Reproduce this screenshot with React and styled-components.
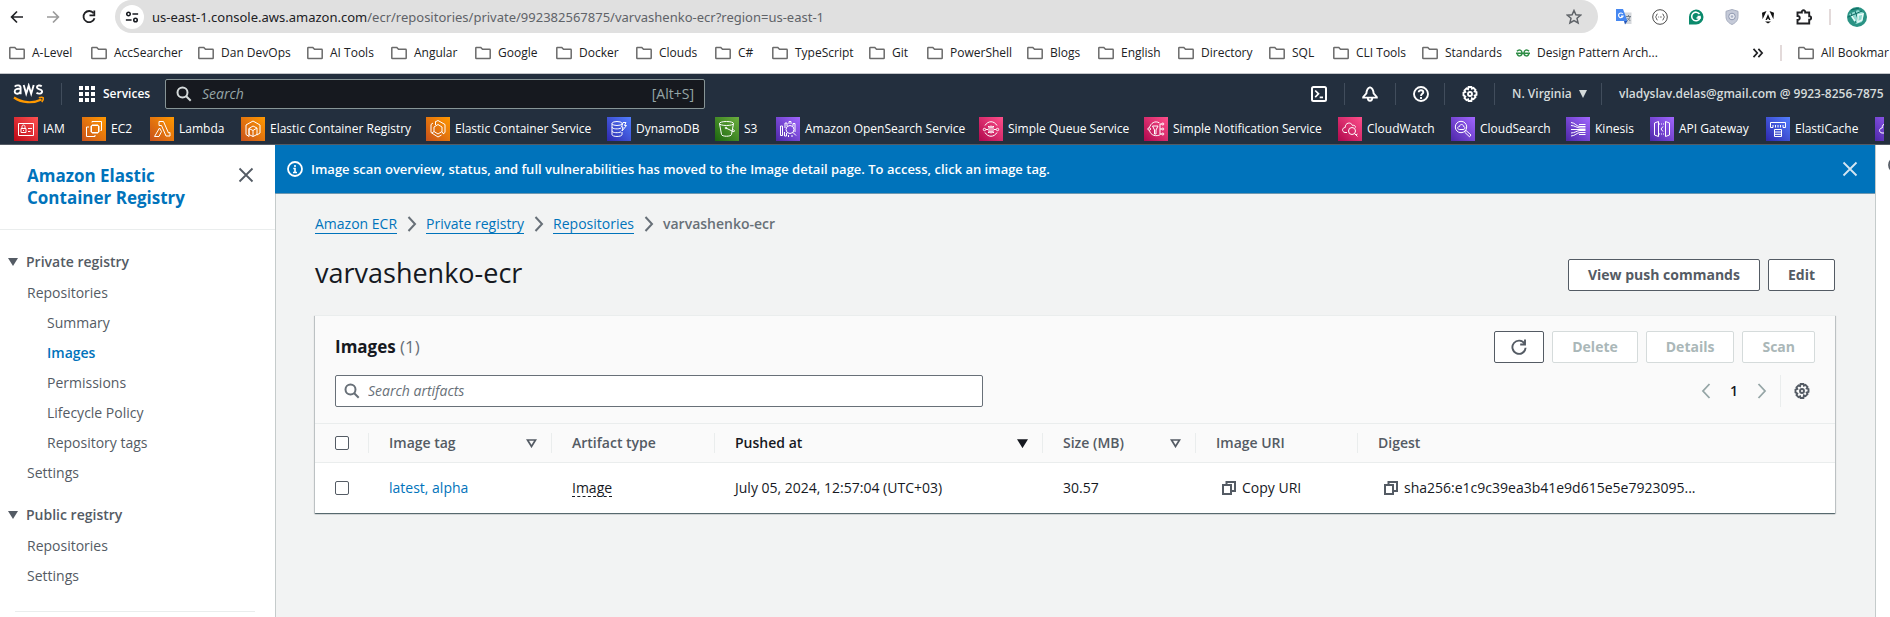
import React from "react";
import styled, { createGlobalStyle, css } from "styled-components";

const GlobalStyle = createGlobalStyle`
  *, *::before, *::after { box-sizing: border-box; }
  body {
    margin: 0;
    background: #fff;
    color: #16191f;
    font: 400 14px/20px "Open Sans", "Noto Sans", sans-serif;
  }
  button, input { font: inherit; color: inherit; }
  button { cursor: pointer; }
  svg { display: block; flex: none; }
`;

const Page = styled.div`
  display: flex;
  flex-direction: column;
  min-height: 100vh;
  overflow-x: hidden;
`;

/* ---------- browser chrome ---------- */

const Toolbar = styled.div`
  display: flex;
  align-items: center;
  height: 33px;
  padding: 0 23px 0 9px;
  background: #fff;
`;

const NavButtons = styled.div`
  display: flex;
  gap: 20px;
  width: 106px;
`;

const IconButton = styled.button`
  display: flex;
  align-items: center;
  justify-content: center;
  width: ${(p) => p.$size || 16}px;
  height: ${(p) => p.$size || 16}px;
  padding: 0;
  border: 0;
  background: none;
  color: ${(p) => p.$color || "#202124"};
`;

const AddressBar = styled.div`
  display: flex;
  flex: 1;
  align-items: center;
  gap: 8px;
  min-width: 0;
  height: 33px;
  padding: 0 16px 0 5px;
  border-radius: 17px;
  background: #e0e0e0;
`;

const SiteInfo = styled.button`
  display: flex;
  align-items: center;
  justify-content: center;
  width: 24px;
  height: 24px;
  padding: 0;
  border: 0;
  border-radius: 50%;
  background: #fff;
`;

const Url = styled.div`
  flex: 1;
  overflow: hidden;
  white-space: nowrap;
  color: #5f6368;
  font-family: "Noto Sans", "Open Sans", sans-serif;
  font-size: 13px;
  outline: none;

  b { font-weight: 400; color: #202124; }
`;

const Extensions = styled.div`
  display: flex;
  align-items: center;
  gap: 20px;
  padding-left: 18px;
`;

const ToolDivider = styled.span`
  width: 2px;
  height: 16px;
  background: #e3dada;
  ${(p) => p.$tight && css`margin: 0 -4px 0 -3px;`}
`;

const Bookmarks = styled.nav`
  display: flex;
  align-items: center;
  height: 41px;
  padding-left: 9px;
  border-bottom: 1px solid #c4c6ca;
  overflow: hidden;
  font-size: 12px;
`;

const Bookmark = styled.a`
  display: flex;
  flex: none;
  align-items: center;
  gap: 7px;
  width: ${(p) => p.$width}px;
  color: #202124;
  text-decoration: none;
  white-space: nowrap;
`;

const BookmarksEnd = styled.div`
  display: flex;
  align-items: center;
  gap: 16px;
  margin-left: auto;
`;

/* ---------- console navigation ---------- */

const ConsoleNav = styled.header`
  background: #232f3e;
  border-bottom: 1px solid #545b64;
  color: #fff;
  font-size: 12px;
  font-weight: 600;
`;

const NavRow = styled.div`
  display: flex;
  align-items: center;
  height: 40px;
  padding-left: 13px;
`;

const NavDivider = styled.span`
  flex: none;
  width: 1px;
  height: 22px;
  background: #414d5c;
`;

const ServicesButton = styled.button`
  display: flex;
  align-items: center;
  gap: 8px;
  width: 103px;
  padding: 0 0 0 17px;
  border: 0;
  background: none;
  white-space: nowrap;
`;

const LogoLink = styled.a`
  width: 48px;
`;

const ConsoleSearch = styled.label`
  display: flex;
  align-items: center;
  gap: 10px;
  width: 540px;
  height: 30px;
  padding: 0 10px;
  border: 1px solid #879596;
  border-radius: 2px;
  background: #16191f;
  color: #95a5a6;
  font-size: 14px;
  font-weight: 400;

  svg { color: #d5dbdb; }
`;

const BareInput = styled.input`
  flex: 1;
  min-width: 0;
  padding: 0;
  border: 0;
  outline: 0;
  background: none;

  &::placeholder {
    color: ${(p) => p.$hint};
    font-style: italic;
    opacity: 1;
  }
`;

const NavTools = styled.div`
  display: flex;
  align-items: center;
  margin-left: auto;
`;

const NavTool = styled.button`
  display: flex;
  align-items: center;
  gap: 7px;
  height: 30px;
  width: ${(p) => p.$width}px;
  padding: 0 0 0 17px;
  border: 0;
  background: none;
  white-space: nowrap;
  color: ${(p) => (p.$soft ? "#d5dbdb" : "#fff")};
`;

const ServiceRow = styled.nav`
  display: flex;
  height: 30px;
  padding-top: 3px;
  margin: 0 6px 0 14px;
  overflow: hidden;
  font-weight: 500;
`;

const ServiceLink = styled.a`
  display: flex;
  flex: none;
  align-items: center;
  gap: 5px;
  width: ${(p) => p.$width}px;
  height: 24px;
  color: #fff;
  text-decoration: none;
  white-space: nowrap;
`;

/* ---------- body ---------- */

const Body = styled.div`
  display: grid;
  flex: 1;
  grid-template-columns: 275px 1fr 15px;
`;

const Sidebar = styled.aside`
  color: #545b64;
`;

const SideHead = styled.div`
  display: flex;
  justify-content: space-between;
  align-items: flex-start;
  padding: 20px 19px 20px 27px;
  border-bottom: 1px solid #eaeded;
`;

const SideTitle = styled.a`
  width: 180px;
  color: #0073bb;
  font-size: 17px;
  font-weight: 700;
  line-height: 22px;
  text-decoration: none;
`;

const SideNav = styled.nav`
  padding-top: 22px;
`;

const SideGroup = styled.button`
  display: flex;
  align-items: center;
  gap: 8px;
  height: 20px;
  padding: 0 0 0 8px;
  margin-bottom: 6px;
  border: 0;
  background: none;
  font-weight: 600;
`;

const SideList = styled.ul`
  margin: 0 0 17px;
  padding: 0;
  list-style: none;
`;

const SideItem = styled.li`
  padding: 5px 0 5px ${(p) => (p.$nested ? 47 : 27)}px;

  a {
    display: block;
    color: ${(p) => (p.$active ? "#0073bb" : "#545b64")};
    font-weight: ${(p) => (p.$active ? 600 : 400)};
    text-decoration: none;
  }
`;

const SideRule = styled.hr`
  height: 1px;
  margin: 20px 20px 0 15px;
  border: 0;
  background: #eaeded;
`;

const Main = styled.main`
  min-width: 0;
  border-left: 1px solid #c5cbcb;
  background: #f2f3f3;
`;

const HelpStrip = styled.aside`
  display: flex;
  align-items: flex-start;
  border-left: 1px solid #c5cbcb;
  overflow: hidden;
  padding: 12px 0 0 12px;
`;

const Flash = styled.div`
  display: flex;
  align-items: center;
  gap: 8px;
  height: 49px;
  margin-left: -1px;
  padding: 0 17px 0 12px;
  border-bottom: 1px solid #6f98b0;
  background: #0073bb;
  color: #fff;
  font-size: 13px;
  font-weight: 600;

  p { flex: 1; margin: 0; }
`;

const Content = styled.div`
  padding: 20px 40px 40px 39px;
`;

const Crumbs = styled.ol`
  display: flex;
  align-items: center;
  gap: 6px;
  margin: 0 0 25px;
  padding: 0;
  list-style: none;

  li { display: flex; align-items: center; gap: 7px; color: #687078; }
  a { border-bottom: 1px solid #0073bb; color: #0073bb; line-height: 18px; text-decoration: none; }
  b { font-weight: 600; }
`;

const TitleRow = styled.div`
  display: flex;
  align-items: flex-start;
  justify-content: space-between;
  margin-bottom: 24px;

  h1 { margin: 0; font-size: 27px; font-weight: 400; line-height: 28px; }
`;

const ButtonGroup = styled.div`
  display: flex;
  gap: 8px;
`;

const Button = styled.button`
  display: flex;
  align-items: center;
  justify-content: center;
  height: 32px;
  padding: 0 ${(p) => (p.$icon ? 16 : 19)}px;
  border: 1px solid #545b64;
  border-radius: 2px;
  background: #fff;
  color: #545b64;
  font-weight: 700;
  white-space: nowrap;

  &:disabled { border-color: #d5dbdb; color: #aab7b8; cursor: default; }
`;

const Card = styled.section`
  background: #fff;
  border-top: 1px solid #eaeded;
  box-shadow: 0 1px 1px 0 rgba(0, 28, 36, 0.5), 1px 1px 1px 0 rgba(0, 28, 36, 0.15), -1px 1px 1px 0 rgba(0, 28, 36, 0.15);
`;

const CardHead = styled.div`
  display: flex;
  flex-direction: column;
  gap: 12px;
  padding: 15px 20px 16px;
  background: #fafafa;
`;

const CardRow = styled.div`
  display: flex;
  align-items: center;
  justify-content: space-between;

  h2 { margin: 0; font-size: 17px; font-weight: 700; line-height: 22px; }
  h2 span { color: #687078; font-weight: 400; }
`;

const FilterBox = styled.label`
  display: flex;
  align-items: center;
  gap: 8px;
  width: 648px;
  height: 32px;
  padding: 0 8px;
  border: 1px solid #687078;
  border-radius: 2px;
  background: #fff;
  color: #687078;
`;

const Pager = styled.div`
  display: flex;
  align-items: center;
  height: 32px;
  padding-right: 5px;

  b { width: 40px; font-weight: 600; text-align: center; }
`;

const PagerRule = styled.span`
  width: 1px;
  height: 32px;
  margin: 0 13px 0 10px;
  background: #eaeded;
`;

const Table = styled.table`
  width: 100%;
  border-collapse: collapse;
  table-layout: fixed;
`;

const HeadCell = styled.th`
  height: 39px;
  padding: 0;
  border-top: 1px solid #eaeded;
  border-bottom: 1px solid #eaeded;
  background: #fafafa;
  color: ${(p) => (p.$sorted ? "#16191f" : "#545b64")};
  font-weight: 600;
  text-align: left;
`;

const HeadInner = styled.div`
  display: flex;
  align-items: center;
  justify-content: space-between;
  height: 20px;
  padding: 0 14px 0 20px;
  border-left: 1px solid ${(p) => (p.$first ? "transparent" : "#eaeded")};
`;

const Cell = styled.td`
  height: 50px;
  padding: 0 0 0 21px;
  overflow: hidden;
  white-space: nowrap;

  a { color: #0073bb; text-decoration: none; }
`;

const Checkbox = styled.input`
  display: block;
  width: 14px;
  height: 14px;
  margin: 0 0 0 -1px;
  border: 1px solid #545b64;
  border-radius: 2px;
  background: #fff;
  appearance: none;
`;

const Abbr = styled.span`
  display: inline-block;
  border-bottom: 1px dashed #16191f;
  line-height: 17px;
`;

const CopyButton = styled.button`
  display: flex;
  align-items: center;
  gap: 5px;
  padding: 0 0 0 5px;
  border: 0;
  background: none;
`;

/* ---------- icons ---------- */

const Icon = ({ size = 16, w = 2, children, ...rest }) => (
  <svg width={size} height={size} viewBox="0 0 16 16" fill="none" stroke="currentColor" strokeWidth={w} aria-hidden="true" {...rest}>
    {children}
  </svg>
);

const FolderIcon = () => (
  <Icon w="1.5" color="#6b6b6b">
    <path d="M.8 13V3c0-.4.2-.6.6-.6h4.400l1.700 1.900h7.100c.4 0 .6.2.6.6V13c0 .4-.2.6-.6.6H1.400c-.4 0-.6-.2-.6-.6z" />
  </Icon>
);
const BackIcon = () => <Icon w="1.700"><path d="M14 8H3M8 2.500 2.600 8 8 13.500" /></Icon>;
const ForwardIcon = () => <Icon w="1.700"><path d="M2 8h11M8 2.500 13.400 8 8 13.500" /></Icon>;
const ReloadIcon = () => (
  <Icon w="1.800"><path d="M12.600 4.200A5.600 5.600 0 1 0 13.500 9.200" /><path d="M13.300 1.500v4.900H8.500" /></Icon>
);
const TuneIcon = () => (
  <Icon size={14} w="1.800"><circle cx="4" cy="4.500" r="2" /><path d="M8.500 4.500H15M1 11.500h6.500" /><circle cx="12" cy="11.500" r="2" /></Icon>
);
const StarIcon = () => (
  <Icon w="1.500"><path d="m8 1.500 1.900 4.300 4.700.4-3.600 3.100 1.100 4.600L8 11.500l-4.100 2.400L5 9.300 1.400 6.200l4.700-.4z" /></Icon>
);
const SearchIcon = () => <Icon w="2"><circle cx="6.500" cy="6.500" r="5" /><path d="m10 10 4.700 4.700" /></Icon>;
const CloseIcon = () => <Icon w="1.800"><path d="m1.500 1.500 13 13m0-13-13 13" /></Icon>;
const ChevronRight = ({ w = 2 }) => <Icon w={w}><path d="m4.500 1 6.500 7-6.500 7" /></Icon>;
const ChevronLeft = ({ w = 2 }) => <Icon w={w}><path d="M11.500 1 5 8l6.500 7" /></Icon>;
const InfoIcon = () => (
  <Icon w="1.800"><circle cx="8" cy="8" r="7" /><path d="M8 4v2M6.300 7.500H8v4M6 11.500h4" strokeWidth="1.600" /></Icon>
);
const ShellIcon = () => (
  <Icon w="2"><rect x="1" y="1" width="14" height="14" rx="1.500" /><path d="m4.200 4.500 3.300 3.300-3.300 3.300M8.700 11.400h3.300" strokeWidth="1.700" /></Icon>
);
const BellIcon = () => (
  <Icon w="1.900"><path d="M8 1.300c-2.500.7-3.400 2.700-3.600 6L1.200 11v.6h13.600V11l-3.200-3.700C11.400 4 10.500 2 8 1.300z" /><path d="M5.800 12c0 3.600 4.400 3.600 4.400 0" /></Icon>
);
const HelpIcon = () => (
  <Icon w="1.900"><circle cx="8" cy="8" r="7" /><path d="M5.700 6.300C5.700 3.400 10.300 3.600 10.300 6.200 10.300 7.800 8 7.900 8 10" /><path d="M8 11v1.900" /></Icon>
);
const GearIcon = () => (
  <Icon w="1.900">
    <path d="M6.600 1h2.800l.5 1.700 1.600-.8 2 2-.8 1.600 1.800.6v2.800l-1.800.6.8 1.600-2 2-1.600-.8L9.400 15H6.600l-.5-1.700-1.600.8-2-2 .8-1.600L1.500 9.400V6.600l1.800-.6-.8-1.600 2-2 1.600.8z" />
    <circle cx="8" cy="8" r="2" />
  </Icon>
);
const RefreshIcon = () => (
  <Icon w="1.900"><path d="M13.600 4.700A6.600 6.600 0 1 0 14.600 8.700" /><path d="M14 .5v5H9.200" /></Icon>
);
const CopyIcon = () => (
  <Icon w="2" color="#545b64"><path d="M2 5h8v9H2z" /><path d="M5.500 4V2H14v9h-3" /></Icon>
);
const CaretDown = ({ width = 10 }) => (
  <svg width={width} height="8" viewBox="0 0 10 8" fill="currentColor" preserveAspectRatio="none" aria-hidden="true"><path d="M0 0h10L5 8z" /></svg>
);
const SortIcon = ({ filled }) => (
  <svg width="11" height="9" viewBox="0 0 11 9" fill={filled ? "currentColor" : "none"} stroke="currentColor" strokeWidth="1.700" aria-hidden="true">
    <path d="M1.500 1h8l-4 6.500z" />
  </svg>
);
const GridIcon = () => (
  <svg width="16" height="16" viewBox="0 0 16 16" fill="currentColor" aria-hidden="true">
    {[0, 6, 12].map((y) => [0, 6, 12].map((x) => <rect key={x + "-" + y} x={x} y={y} width="4" height="4" />))}
  </svg>
);
const AwsLogo = () => (
  <svg width="32" height="22" viewBox="0 0 32 22" role="img" aria-label="AWS">
    <g fill="none" stroke="#fff" strokeWidth="1.900">
      <path d="M1.700 3.600C3.500 1.900 7.600 1.700 7.600 4.800v6.400M7.600 6.100C4.500 5.400 1.700 6 1.700 8.400c0 3.300 5.500 3 5.900-.4" />
      <path d="m10.700 2 2.500 8.700L15.700 2.600l2.500 8.100L20.700 2" />
      <path d="M28.800 3.200C27 2 23.800 2.200 23.900 4.300c.1 2.500 5.300 1.500 5.200 4.200-.1 2.500-3.800 2.600-5.600 1.300" />
    </g>
    <path d="M1 14.500c8 5.600 19 6.200 27.500 2" fill="none" stroke="#f90" strokeWidth="2.200" />
    <path d="M25.800 14.700c1.700-.4 3.700-.5 4.500.1.300 1-.5 3-1.500 4.300" fill="none" stroke="#f90" strokeWidth="1.500" />
  </svg>
);

const gradients = {
  red: ["#bd0816", "#ff5252"],
  orange: ["#c8511b", "#f90"],
  blue: ["#2e27ad", "#527fff"],
  green: ["#1b660f", "#6cae3e"],
  purple: ["#4d27a8", "#a166ff"],
  pink: ["#b0084d", "#ff4f8b"],
};

const glyphs = {
  iam: <><path d="M4.500 6.500h15v12h-15z" /><path d="M7 11.500h5v4H7zM8 11.500V9.500c0-2 3-2 3 0v2M9.500 13v1M14 11.500h4M14 14.500h2.500" /></>,
  ec2: <><path d="M9.500 8.500h7v7h-7zM11 7v1.500m2-1.500v1.500m2-1.500v1.500M11 15.500V17m2-1.500V17m2-1.500V17M8 10h1.500M8 12h1.500M8 14h1.500m7-4H18m-1.500 2H18m-1.500 2H18" /><path d="M10 5.500v-1h9.500v9h-1M7 10H4.500v9.500H13V18" /></>,
  lambda: <><path d="M9 4.500h4.500l5 11.500 1.500-.5V19h-4L11.500 8.500H9zM9.500 11 11.500 14.500 9 19.500H4.500z" /></>,
  ecr: <path d="m12 4 7 4v8l-3 2v-7l-4-2-4 2.500v8L5 17.500V8zM8 11.500l4 2v6l-4-2zM12 13.500 16 11M12 19.500l4-2" />,
  ecs: <><path d="m9 5 3-1.500 7 4v8l-2 1.500M7 6 5 7.500v8l7 4.500 3.500-2" /><path d="m12 7.500 4 2.500v4.500L12 17l-4-2.500V10zM9.500 5v3m6.500 6.500 1.500 2.500M8 14.500 6 16" /></>,
  dynamo: <><ellipse cx="10" cy="6.500" rx="5" ry="2" /><path d="M5 6.500v11c0 2.600 10 2.600 10 0V15M5 10c0 2.300 7 2.300 9 1M5 13.800c0 2.300 7 2.300 9 1M15 6.500V8M16 5.500h3l-1.500 3h2L15 14l1-4h-1.500z" /></>,
  s3: <><ellipse cx="11.500" cy="6.500" rx="7" ry="2" /><path d="M4.500 6.500 6.500 17.500c.4 2.300 9.600 2.300 10 0l2-11M11 11l7 3.500c2 .5 2-1-.5-2.500" /><circle cx="11" cy="11" r=".8" /></>,
  opensearch: <><circle cx="14" cy="12.500" r="4" /><path d="m17 15.500 3 3M4.500 9v9.500h2V9zM8.500 15v4h2v-3M12.500 18v2M16 18v2M9 11V6h2v3M13 7V4.500h2V7M17 9V6.500h2V15" /></>,
  sqs: <><path d="M6 8.500C9 3.500 15 3.500 18 8.500M6 15.500c3 5 9 5 12 0" /><circle cx="5.500" cy="12.500" r="1.200" /><circle cx="18.500" cy="12.500" r="1.200" /><path d="M10 10h4v5h-4zM9 9.500h1.500M13.500 9.500H15M9 15.500h1.500m3 0H15M12 8.500v8M7 12.500h2m6 0h2" /></>,
  sns: <><path d="M15.500 6C11 3 6.500 6.500 5.500 10.500M5.500 13.500c1 5 7 6.500 11 4" /><circle cx="5.200" cy="12" r="1.300" /><path d="M8.500 9h5.500l-2 4v4h-1.500v-4zM16 7v10M16 7h2m-2 5h2m-2 5h2" /><circle cx="18.800" cy="7" r="1" /><circle cx="18.800" cy="12" r="1" /><circle cx="18.800" cy="17" r="1" /></>,
  watch: <><path d="M9 15.500H7c-3.500-.5-3-5 .2-5C7 5.500 13 4.500 14.500 8.500c1.700-.7 3 .3 3 2" /><circle cx="14" cy="14" r="3.500" /><path d="m16.500 16.500 3 3M18 18l1.500-1" /></>,
  csearch: <><circle cx="10" cy="10" r="5.700" /><path d="m14 14 1-.5 5 4.500-1.500 1.800L13.500 15zM8.500 12.500c-3-.5-2-3 0-3 .5-3 4-2.500 4 0 2 0 2 3-.5 3z" /></>,
  kinesis: <path d="M5 5.500c4 0 6 4.500 9 4h5.500M5 8.500c4 0 6 2.500 9 2.500h5.500M5 12.500h14.500M5 16c4 0 6-2.500 9-2.500h5.500M5 19c4 0 6-3.500 9-3.500h5.500M13 7.500h6.500M13 17.500h6.500" />,
  api: <><path d="m8.500 4.500-4 1.500v12l4 1.500zm7 0 4 1.500v12l-4 1.500zM13 9.500 11 12l2 2.500" /><path d="M9 7h6.500M9 17h6.500" strokeDasharray="1 1" /></>,
  cache: <><path d="M4.500 5.500h15v5h-2.500V8M4.500 5.500v5H7V8M9.500 10.500V8M12 10.500V8M14.500 10.500V8" /><path d="M8.500 12.500h7v7h-7zM8.500 15h7m-7 2.300h7" /></>,
  cloud: <path d="M9 16H7c-3.500-.5-3-5 .2-5C7 6 13 5 14.500 9" />,
};

const ServiceIcon = ({ id, tone }) => (
  <svg width="24" height="24" viewBox="0 0 24 24" aria-hidden="true">
    <defs>
      <linearGradient id={"tone-" + id} x1="0" y1="1" x2="1" y2="0">
        <stop offset="0" stopColor={gradients[tone][0]} />
        <stop offset="1" stopColor={gradients[tone][1]} />
      </linearGradient>
    </defs>
    <rect width="24" height="24" fill={`url(#tone-${id})`} />
    <g fill="none" stroke="#fff" strokeWidth="1">{glyphs[id]}</g>
  </svg>
);

const TranslateIcon = () => (
  <svg width="16" height="16" viewBox="0 0 16 16" aria-hidden="true">
    <path d="M6 3.500h9.500V15H9z" fill="#d5d8dc" />
    <path d="M0 0h7l4.500 12H0z" fill="#4688f1" />
    <path d="M8 12h3.500L9 15.500z" fill="#2456b8" />
    <path d="M6.800 5A2.300 2.300 0 1 0 7 7.200H5" fill="none" stroke="#fff" strokeWidth="1.200" />
    <path d="M10 7.500h5M12.500 6v1.500M14 8c-.6 2-2 3-3 3.700M11.500 9l2.800 3" fill="none" stroke="#75808c" strokeWidth="1" />
  </svg>
);
const BracesIcon = () => (
  <Icon w="1" color="#4a4a4a"><circle cx="8" cy="8" r="7.300" /><path d="M5.500 5c-1.500 0-.5 2.500-2 3 1.500.5.500 3 2 3m5-6c1.500 0 .5 2.500 2 3-1.500.5-.5 3-2 3M6.300 8h.8m.9 0h.8m.5 0h.6" /></Icon>
);
const GrammarIcon = () => (
  <svg width="16" height="16" viewBox="0 0 16 16" aria-hidden="true">
    <path d="M8 .5A7.500 7.500 0 1 1 8 15.500H1V8A7.500 7.500 0 0 1 8 .5z" fill="#0b8a6c" />
    <path d="M11.500 5A4.300 4.300 0 1 0 12 9H8.500m1-1.500H12V10" fill="none" stroke="#fff" strokeWidth="1.600" />
  </svg>
);
const ShieldIcon = () => (
  <svg width="16" height="16" viewBox="0 0 16 16" aria-hidden="true">
    <path d="M8 .5 14 2.300v5.200c0 4-2.500 6.500-6 8-3.500-1.500-6-4-6-8V2.300z" fill="#c5cad8" stroke="#a6adbf" />
    <circle cx="8" cy="7.500" r="3.300" fill="#e9ebf2" stroke="#8f98b0" />
    <circle cx="8" cy="7.500" r="1.300" fill="#a9b1c5" />
  </svg>
);
const AngularIcon = () => (
  <svg width="16" height="16" viewBox="0 0 16 16" fill="#111" aria-hidden="true">
    <path d="M9.500 2 14 3.800l-.6 6.500zM6.500 2 2 3.800l.6 6.500zM8 5l2.500 6H9L8.500 9.800h-1L7 11H5.500zM5 12.500h6L8 14.500z" />
  </svg>
);
const PuzzleIcon = () => (
  <Icon w="1.900"><path d="M1.500 3.500h4.300C5.400.5 9.600.5 9.200 3.500h4v3.700c2.600-.2 2.600 3.800 0 3.600v3.700H1.500v-3.500c3 .2 3-4.300 0-4z" /></Icon>
);
const Avatar = () => (
  <svg width="20" height="20" viewBox="0 0 20 20" aria-hidden="true">
    <circle cx="10" cy="10" r="10" fill="#2a9384" />
    <path d="M2 7 11 3l6 3-2 9-6 2z" fill="#8fd9d0" />
    <path d="m4 6 5 10M8 4l4 11M1 10l14-6M4 3l8-2" stroke="#0d6a62" fill="none" />
    <path d="m11 8 5-1-1 6-4 2zM5 9l3 5" stroke="#e7fbf8" fill="none" strokeWidth="1.500" />
  </svg>
);
const GeeksIcon = () => (
  <svg width="14" height="8" viewBox="0 0 14 8" fill="none" stroke="#2f8d46" strokeWidth="1.500" aria-hidden="true">
    <path d="M0 4.300h14M1 2.300C3 0 6 1 6 4c0 3.500-4.500 4-4.800.5M13 2.300C11 0 8 1 8 4c0 3.500 4.500 4 4.800.5" />
  </svg>
);
const MoreIcon = () => <Icon size={12} w="2.300"><path d="m2 2.500 5 5.500-5 5.500M8.500 2.500l5 5.500-5 5.500" /></Icon>;

/* ---------- data ---------- */

const bookmarks = [
  ["A-Level", 82], ["AccSearcher", 107], ["Dan DevOps", 109], ["AI Tools", 84], ["Angular", 84],
  ["Google", 81], ["Docker", 80], ["Clouds", 79], ["C#", 57], ["TypeScript", 97], ["Git", 58],
  ["PowerShell", 100], ["Blogs", 71], ["English", 80], ["Directory", 91], ["SQL", 64],
  ["CLI Tools", 89], ["Standards", 94],
];

const services = [
  ["iam", "IAM", "red", 68], ["ec2", "EC2", "orange", 68], ["lambda", "Lambda", "orange", 91],
  ["ecr", "Elastic Container Registry", "orange", 185], ["ecs", "Elastic Container Service", "orange", 181],
  ["dynamo", "DynamoDB", "blue", 108], ["s3", "S3", "green", 61],
  ["opensearch", "Amazon OpenSearch Service", "purple", 203], ["sqs", "Simple Queue Service", "pink", 165],
  ["sns", "Simple Notification Service", "pink", 194], ["watch", "CloudWatch", "pink", 113],
  ["csearch", "CloudSearch", "purple", 115], ["kinesis", "Kinesis", "purple", 84],
  ["api", "API Gateway", "purple", 116], ["cache", "ElastiCache", "blue", 109], ["cloud", "", "purple", 24],
];

const sideGroups = [
  { title: "Private registry", items: [
    ["Repositories"], ["Summary", true], ["Images", true, true], ["Permissions", true],
    ["Lifecycle Policy", true], ["Repository tags", true], ["Settings"],
  ] },
  { title: "Public registry", items: [["Repositories"], ["Settings"]] },
];

const columns = [
  { label: "Image tag", width: 183, sort: true },
  { label: "Artifact type", width: 163 },
  { label: "Pushed at", width: 328, sort: true, sorted: true },
  { label: "Size (MB)", width: 153, sort: true },
  { label: "Image URI", width: 162 },
  { label: "Digest" },
];

/* ---------- sections ---------- */

const BrowserChrome = () => (
  <>
    <Toolbar>
      <NavButtons>
        <IconButton aria-label="Back"><BackIcon /></IconButton>
        <IconButton aria-label="Forward" $color="#9b9b9b"><ForwardIcon /></IconButton>
        <IconButton aria-label="Reload"><ReloadIcon /></IconButton>
      </NavButtons>
      <AddressBar>
        <SiteInfo aria-label="Site information"><TuneIcon /></SiteInfo>
        <Url role="textbox" aria-label="Address" tabIndex={0}>
          <b>us-east-1.console.aws.amazon.com</b>/ecr/repositories/private/992382567875/varvashenko-ecr?region=us-east-1
        </Url>
        <IconButton aria-label="Bookmark this page" $color="#5f6368"><StarIcon /></IconButton>
      </AddressBar>
      <Extensions>
        <IconButton aria-label="Translate"><TranslateIcon /></IconButton>
        <IconButton aria-label="JSON viewer"><BracesIcon /></IconButton>
        <IconButton aria-label="Grammar"><GrammarIcon /></IconButton>
        <IconButton aria-label="Shield"><ShieldIcon /></IconButton>
        <IconButton aria-label="Angular tools"><AngularIcon /></IconButton>
        <IconButton aria-label="Extensions"><PuzzleIcon /></IconButton>
        <ToolDivider $tight />
        <IconButton aria-label="Profile" $size={20}><Avatar /></IconButton>
      </Extensions>
    </Toolbar>
    <Bookmarks aria-label="Bookmarks">
      {bookmarks.map(([name, width]) => (
        <Bookmark key={name} href="#" $width={width}><FolderIcon />{name}</Bookmark>
      ))}
      <Bookmark href="#" $width={140}><GeeksIcon />Design Pattern Arch...</Bookmark>
      <BookmarksEnd>
        <IconButton aria-label="More bookmarks" $size={12}><MoreIcon /></IconButton>
        <ToolDivider />
        <Bookmark href="#" $width={92}><FolderIcon />All Bookmar</Bookmark>
      </BookmarksEnd>
    </Bookmarks>
  </>
);

const ConsoleHeader = () => (
  <ConsoleNav>
    <NavRow>
      <LogoLink href="#" aria-label="AWS home"><AwsLogo /></LogoLink>
      <NavDivider />
      <ServicesButton><GridIcon />Services</ServicesButton>
      <ConsoleSearch>
        <SearchIcon />
        <BareInput type="search" placeholder="Search" aria-label="Search" $hint="#95a5a6" />
        <span>[Alt+S]</span>
      </ConsoleSearch>
      <NavTools>
        <NavTool $width={50} aria-label="CloudShell"><ShellIcon /></NavTool>
        <NavDivider />
        <NavTool $width={50} aria-label="Notifications"><BellIcon /></NavTool>
        <NavDivider />
        <NavTool $width={48} aria-label="Help"><HelpIcon /></NavTool>
        <NavDivider />
        <NavTool $width={49} aria-label="Settings"><GearIcon /></NavTool>
        <NavDivider />
        <NavTool $width={106} $soft>N. Virginia<CaretDown width={8} /></NavTool>
        <NavDivider />
        <NavTool $width={288} $soft>vladyslav.delas@gmail.com @ 9923-8256-7875<CaretDown width={8} /></NavTool>
      </NavTools>
    </NavRow>
    <ServiceRow aria-label="Favorite services">
      {services.map(([id, name, tone, width]) => (
        <ServiceLink key={id} href="#" $width={width} aria-label={name || "More services"}>
          <ServiceIcon id={id} tone={tone} />{name}
        </ServiceLink>
      ))}
    </ServiceRow>
  </ConsoleNav>
);

const SideBar = () => (
  <Sidebar>
    <SideHead>
      <SideTitle href="#">Amazon Elastic Container Registry</SideTitle>
      <IconButton aria-label="Close navigation" $size={20} $color="#545b64"><CloseIcon /></IconButton>
    </SideHead>
    <SideNav>
      {sideGroups.map((group) => (
        <React.Fragment key={group.title}>
          <SideGroup aria-expanded="true"><CaretDown />{group.title}</SideGroup>
          <SideList>
            {group.items.map(([label, nested, active]) => (
              <SideItem key={label} $nested={nested} $active={active}><a href="#">{label}</a></SideItem>
            ))}
          </SideList>
        </React.Fragment>
      ))}
      <SideRule />
    </SideNav>
  </Sidebar>
);

const ImagesTable = () => (
  <Table>
    <colgroup>
      <col style={{ width: 53 }} />
      {columns.map((c) => <col key={c.label} style={{ width: c.width }} />)}
    </colgroup>
    <thead>
      <tr>
        <HeadCell><HeadInner $first><Checkbox type="checkbox" aria-label="Select all images" /></HeadInner></HeadCell>
        {columns.map((c) => (
          <HeadCell key={c.label} $sorted={c.sorted}>
            <HeadInner>
              {c.label}
              {c.sort && <IconButton aria-label={"Sort by " + c.label} $size={11} $color="inherit"><SortIcon filled={c.sorted} /></IconButton>}
            </HeadInner>
          </HeadCell>
        ))}
      </tr>
    </thead>
    <tbody>
      <tr>
        <Cell><Checkbox type="checkbox" aria-label="Select latest, alpha" /></Cell>
        <Cell><a href="#">latest, alpha</a></Cell>
        <Cell><Abbr>Image</Abbr></Cell>
        <Cell>July 05, 2024, 12:57:04 (UTC+03)</Cell>
        <Cell>30.57</Cell>
        <Cell><CopyButton><CopyIcon />Copy URI</CopyButton></Cell>
        <Cell><CopyButton><CopyIcon />sha256:e1c9c39ea3b41e9d615e5e7923095...</CopyButton></Cell>
      </tr>
    </tbody>
  </Table>
);

export default function App() {
  return (
    <Page>
      <GlobalStyle />
      <BrowserChrome />
      <ConsoleHeader />
      <Body>
        <SideBar />
        <Main>
          <Flash role="status">
            <InfoIcon />
            <p>Image scan overview, status, and full vulnerabilities has moved to the Image detail page. To access, click an image tag.</p>
            <IconButton aria-label="Dismiss" $color="#d5e6f2"><CloseIcon /></IconButton>
          </Flash>
          <Content>
            <Crumbs>
              {["Amazon ECR", "Private registry", "Repositories"].map((name) => (
                <li key={name}><a href="#">{name}</a><ChevronRight /></li>
              ))}
              <li><b>varvashenko-ecr</b></li>
            </Crumbs>
            <TitleRow>
              <h1>varvashenko-ecr</h1>
              <ButtonGroup>
                <Button>View push commands</Button>
                <Button>Edit</Button>
              </ButtonGroup>
            </TitleRow>
            <Card>
              <CardHead>
                <CardRow>
                  <h2>Images <span>(1)</span></h2>
                  <ButtonGroup>
                    <Button $icon aria-label="Refresh"><RefreshIcon /></Button>
                    <Button disabled>Delete</Button>
                    <Button disabled>Details</Button>
                    <Button disabled>Scan</Button>
                  </ButtonGroup>
                </CardRow>
                <CardRow>
                  <FilterBox>
                    <SearchIcon />
                    <BareInput type="search" placeholder="Search artifacts" aria-label="Search artifacts" $hint="#687078" />
                  </FilterBox>
                  <Pager>
                    <IconButton aria-label="Previous page" $color="#95a5a6"><ChevronLeft w={1.8} /></IconButton>
                    <b>1</b>
                    <IconButton aria-label="Next page" $color="#95a5a6"><ChevronRight w={1.8} /></IconButton>
                    <PagerRule />
                    <IconButton aria-label="Preferences" $color="#545b64"><GearIcon /></IconButton>
                  </Pager>
                </CardRow>
              </CardHead>
              <ImagesTable />
            </Card>
          </Content>
        </Main>
        <HelpStrip aria-label="Help panel">
          <IconButton aria-label="Open help panel" $color="#545b64"><InfoIcon /></IconButton>
        </HelpStrip>
      </Body>
    </Page>
  );
}
